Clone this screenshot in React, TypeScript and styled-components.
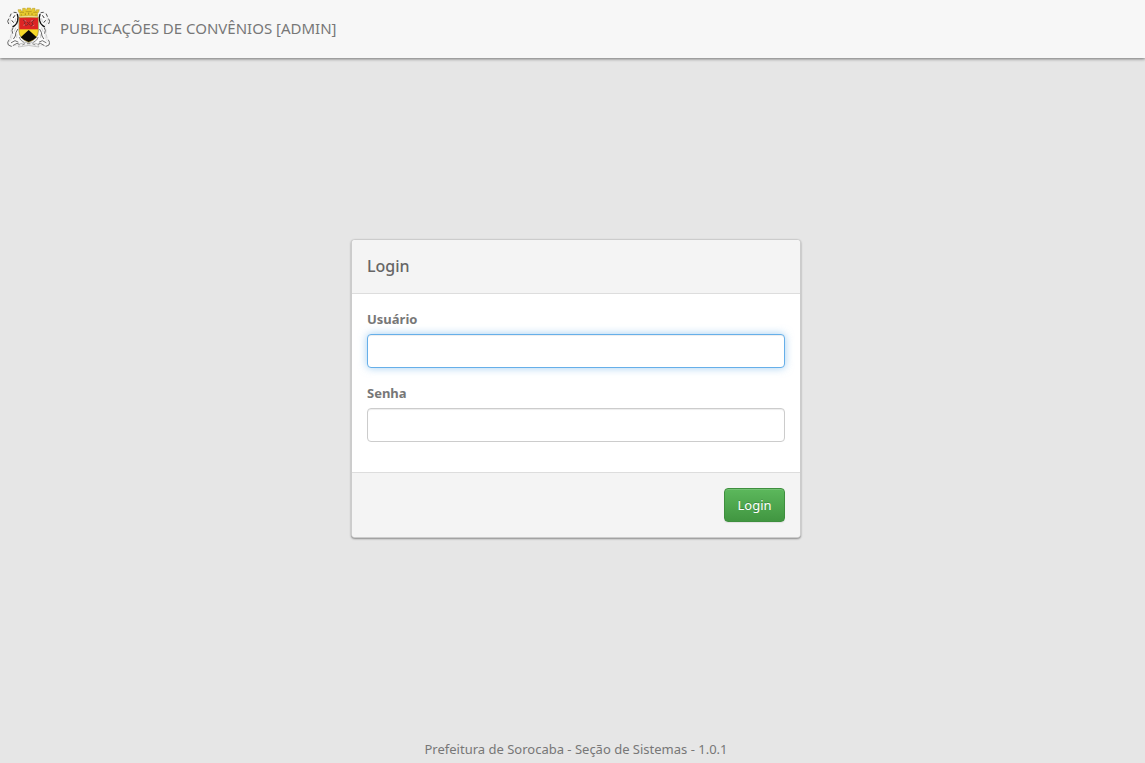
import React from "react";
import styled, { createGlobalStyle } from "styled-components";

const GlobalStyle = createGlobalStyle`
  * { box-sizing: border-box; }
  html, body, #root { height: 100%; }
  body {
    margin: 0;
    background: #e6e6e6;
    color: #777;
    font-family: "Segoe UI", "Noto Sans", "Open Sans", sans-serif;
    font-size: 14px;
    line-height: 20px;
  }
`;

const Page = styled.div`
  min-height: 100%;
  display: flex;
  flex-direction: column;
`;

const Navbar = styled.header`
  height: 58px;
  padding: 0 6px 2px;
  display: flex;
  align-items: center;
  background: #f7f7f7;
  box-shadow: 0 1px 3px rgba(0, 0, 0, 0.5);
`;

const Brand = styled.a`
  display: flex;
  align-items: center;
  gap: 10px;
  color: #777;
  font-size: 15px;
  text-decoration: none;
`;

const Main = styled.main`
  flex: 1;
  display: flex;
  align-items: center;
  justify-content: center;
  padding: 0 0 21px 7px;
`;

const Panel = styled.form`
  width: 100%;
  max-width: 450px;
  border: 1px solid #ccc;
  border-radius: 4px;
  background: #fff;
  box-shadow: 0 1px 2px rgba(0, 0, 0, 0.4);
`;

const PanelHeading = styled.div`
  padding: 16px 15px 17px;
  border-bottom: 1px solid #ddd;
  border-radius: 3px 3px 0 0;
  background: #f4f4f4;
`;

const PanelTitle = styled.h1`
  margin: 0;
  color: #666;
  font-size: 16px;
  font-weight: 500;
  line-height: 20px;
`;

const PanelBody = styled.div`
  padding: 15px;
`;

const Field = styled.div`
  display: flex;
  flex-direction: column;
  gap: 5px;
  margin-bottom: 15px;
`;

const Label = styled.label`
  font-size: 13px;
  font-weight: 700;
`;

const Input = styled.input`
  width: 100%;
  height: 34px;
  padding: 6px 12px;
  border: 1px solid #ccc;
  border-radius: 4px;
  background: #fff;
  color: #555;
  font: inherit;
  box-shadow: inset 0 1px 1px rgba(0, 0, 0, 0.075);

  &:focus {
    border-color: #66afe9;
    outline: 0;
    box-shadow: inset 0 1px 1px rgba(0, 0, 0, 0.075), 0 0 8px rgba(102, 175, 233, 0.6);
  }
`;

const PanelFooter = styled.div`
  display: flex;
  justify-content: flex-end;
  padding: 15px;
  border-top: 1px solid #ddd;
  border-radius: 0 0 3px 3px;
  background: #f4f4f4;
`;

const Button = styled.button`
  height: 34px;
  min-width: 61px;
  padding: 0 12px;
  border: 1px solid #3e8f3e;
  border-radius: 4px;
  background: linear-gradient(#5cb85c, #419641);
  color: #fff;
  font: inherit;
  font-size: 13px;
  text-shadow: 0 -1px 0 rgba(0, 0, 0, 0.2);
  box-shadow: inset 0 1px 0 rgba(255, 255, 255, 0.15), 0 1px 1px rgba(0, 0, 0, 0.075);
`;

const Footer = styled.footer`
  padding: 0 0 4px 7px;
  text-align: center;
  font-size: 13px;
`;

const Supporter = () => (
  <g strokeLinecap="round" strokeLinejoin="round">
    <path
      d="M37 40 L46 36 L54 43 L56 56 L53 70 L56 84 L60 105 L72 122 L84 128 L84 136 L62 132 L48 136 L30 138 L23 129 L32 122 L37 108 L32 92 L38 80 L30 66 L31 50 Z"
      fill="#fafafa"
      stroke="#ccc"
      strokeWidth="1.5"
    />
    <path d="M33 42 L30 49 M26 57 L23 64 L26 71 M42 37 L49 38" fill="none" stroke="#555" strokeWidth="3" />
    <path d="M52 43 L54 52 L53 62 L50 70 L44 77 L39 80" fill="none" stroke="#111" strokeWidth="4" />
    <path d="M44 47 L40 53 M36 62 L40 67" fill="none" stroke="#333" strokeWidth="3" />
    <path d="M39 84 L36 91 L38 100 M53 88 L48 97 L46 108 L41 116" fill="none" stroke="#444" strokeWidth="2.5" />
    <path d="M27 120 L23 127 L25 135 L34 139 M34 128 L45 122 L54 126 M40 136 L51 130 L60 134" fill="none" stroke="#555" strokeWidth="2.5" />
    <path d="M58 112 L62 120 L72 127 M66 135 L76 131" fill="none" stroke="#777" strokeWidth="2.5" />
    <path d="M47 56 L45 65 M47 84 L43 94 M51 104 L50 113 M33 104 L31 114" fill="none" stroke="#bbb" strokeWidth="2" />
  </g>
);

const Crest = () => (
  <svg width="44" height="42" viewBox="18 21 132 126" role="img" aria-label="Sorocaba">
    <Supporter />
    <g transform="translate(172 0) scale(-1 1)">
      <Supporter />
    </g>
    <path d="M59 132 Q86 121 113 132 L117 141 Q86 132 55 141 Z" fill="#eee" stroke="#999" strokeWidth="1.5" />
    <path d="M67 135 L75 131 M81 131 L91 131 M97 131 L106 135" stroke="#555" strokeWidth="2" />
    <path d="M57 52 H115 V94 Q115 116 86 127 Q57 116 57 94 Z" fill="#f6d928" stroke="#766428" strokeWidth="1.5" />
    <path d="M58 53 H114 V88 H58 Z" fill="#dd2424" />
    <path d="M86 90 L110 112 Q102 120 86 126 Q70 120 62 112 Z" fill="#0b0a05" />
    <path d="M69 60 L76 65 L73 72 L79 78 M103 60 L95 66 L99 73 L92 79 M80 65 L91 76 M91 64 L80 77" fill="none" stroke="#84282b" strokeWidth="3" />
    <path d="M74 61 L79 64 M98 61 L92 64 M70 76 L75 74 M98 78 L103 75" stroke="#d8a3a0" strokeWidth="2" />
    <path
      d="M56 36 L54 29 H63 V33 H68 V25 H76 V29 H81 V24 H92 V29 H97 V25 H105 V33 H109 V29 H118 L116 36 L113 40 V49 Q86 45 59 49 V40 Z"
      fill="#e7c92d"
      stroke="#b69a25"
      strokeWidth="1.5"
    />
    <path d="M60 37 H72 M77 35 H95 M100 37 H112" stroke="#b3951f" strokeWidth="2.5" />
    <path d="M64 43 V47 M76 40 V45 M86 38 V44 M96 40 V45 M108 43 V47" stroke="#a98b1c" strokeWidth="3" />
    <path d="M60 51 Q86 47 112 51" fill="none" stroke="#f2df75" strokeWidth="2" />
  </svg>
);

export default function App() {
  return (
    <>
      <GlobalStyle />
      <Page>
        <Navbar>
          <Brand href="#">
            <Crest />
            PUBLICAÇÕES DE CONVÊNIOS [ADMIN]
          </Brand>
        </Navbar>
        <Main>
          <Panel onSubmit={(event) => event.preventDefault()}>
            <PanelHeading>
              <PanelTitle>Login</PanelTitle>
            </PanelHeading>
            <PanelBody>
              <Field>
                <Label htmlFor="usuario">Usuário</Label>
                <Input id="usuario" type="text" autoComplete="username" autoFocus />
              </Field>
              <Field>
                <Label htmlFor="senha">Senha</Label>
                <Input id="senha" type="password" autoComplete="current-password" />
              </Field>
            </PanelBody>
            <PanelFooter>
              <Button type="submit">Login</Button>
            </PanelFooter>
          </Panel>
        </Main>
        <Footer>Prefeitura de Sorocaba - Seção de Sistemas - 1.0.1</Footer>
      </Page>
    </>
  );
}
